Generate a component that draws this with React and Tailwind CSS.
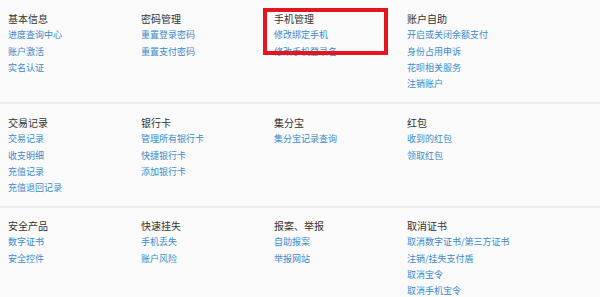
const sections = [
  [
    { title: "基本信息", links: ["进度查询中心", "账户激活", "实名认证"] },
    { title: "密码管理", links: ["重置登录密码", "重置支付密码"] },
    { title: "手机管理", links: ["修改绑定手机", "修改手机登录名"], marked: true },
    { title: "账户自助", links: ["开启或关闭余额支付", "身份占用申诉", "花呗相关服务", "注销账户"] },
  ],
  [
    { title: "交易记录", links: ["交易记录", "收支明细", "充值记录", "充值退回记录"] },
    { title: "银行卡", links: ["管理所有银行卡", "快捷银行卡", "添加银行卡"] },
    { title: "集分宝", links: ["集分宝记录查询"] },
    { title: "红包", links: ["收到的红包", "领取红包"] },
  ],
  [
    { title: "安全产品", links: ["数字证书", "安全控件"] },
    { title: "快速挂失", links: ["手机丢失", "账户风险"] },
    { title: "报案、举报", links: ["自助报案", "举报网站"] },
    { title: "取消证书", links: ["取消数字证书/第三方证书", "注销/挂失支付盾", "取消宝令", "取消手机宝令"] },
  ],
];

function Column({ col }) {
  return (
    <div className="relative w-[133px] shrink-0">
      <div className="text-[10px] leading-[16.3px] text-[#333]">{col.title}</div>
      {col.links.map((l) => (
        <a key={l} className="block text-[9px] leading-[16.3px] text-[#3b8bcb] cursor-pointer">
          {l}
        </a>
      ))}
      {col.marked && (
        <div className="absolute left-[-11px] top-[-3px] w-[125px] h-[47px] border-4 border-[#e3151e]" />
      )}
    </div>
  );
}

export default function App() {
  return (
    <div
      className="w-[600px] h-[297px] bg-[#fafafa] overflow-hidden"
      style={{ fontFamily: '"Noto Sans CJK SC", "Noto Sans", sans-serif' }}
    >
      {sections.map((row, i) => (
        <div
          key={i}
          className={
            i < 2
              ? "flex pl-[8px] pt-[11px] h-[104px] border-b-2 border-[#ececec]"
              : "flex pl-[8px] pt-[10px]"
          }
        >
          {row.map((col) => (
            <Column key={col.title} col={col} />
          ))}
        </div>
      ))}
    </div>
  );
}
